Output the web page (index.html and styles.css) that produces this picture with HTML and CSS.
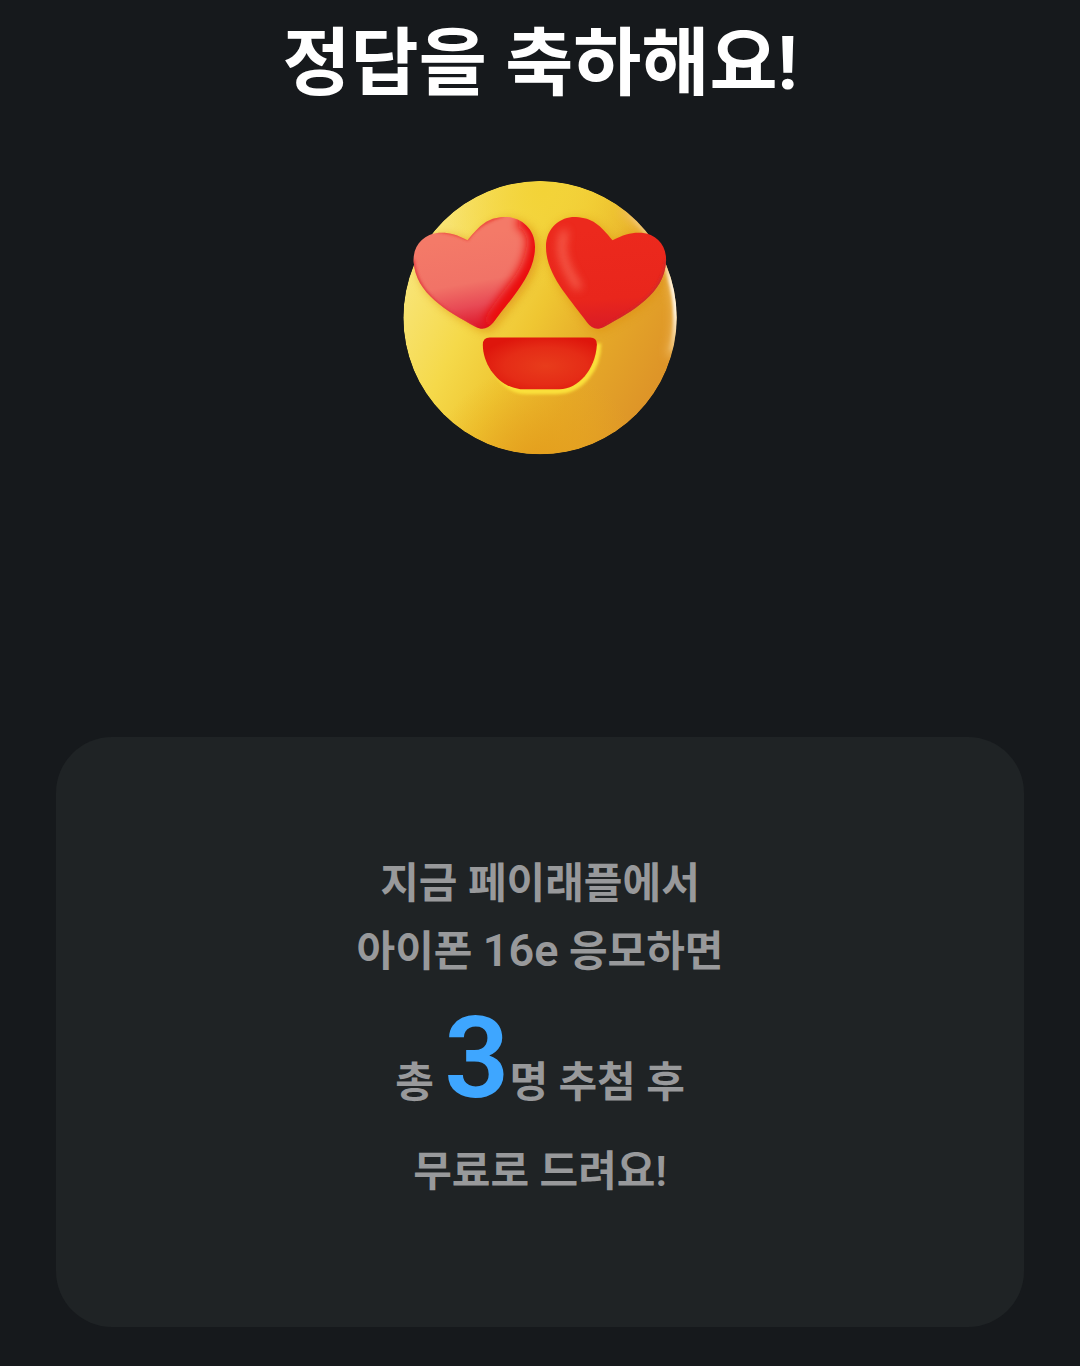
FILE: index.html
```
<!DOCTYPE html>
<html lang="ko">
<head>
    <meta charset="UTF-8">
    <meta name="viewport" content="width=device-width, initial-scale=1.0">
    <title>정답을 축하해요!</title>
    <link rel="stylesheet" href="styles.css">
</head>
<body>
    <main class="result">
        <h1 class="title">정답을 축하해요!</h1>

        <svg class="emoji" viewBox="37 33 824 824" role="img" aria-label="하트 눈 이모지">
            <defs>
                <linearGradient id="face" x1="0.06" y1="0.25" x2="0.94" y2="0.7">
                    <stop offset="0" stop-color="#f8e578"/>
                    <stop offset="0.28" stop-color="#f5d94a"/>
                    <stop offset="0.5" stop-color="#efc632"/>
                    <stop offset="0.74" stop-color="#e5a828"/>
                    <stop offset="1" stop-color="#de9528"/>
                </linearGradient>
                <radialGradient id="top" cx="460" cy="60" r="300" gradientUnits="userSpaceOnUse">
                    <stop offset="0" stop-color="#f3d337"/>
                    <stop offset="1" stop-color="#f3d337" stop-opacity="0"/>
                </radialGradient>
                <radialGradient id="bottom" cx="440" cy="910" r="320" gradientUnits="userSpaceOnUse">
                    <stop offset="0" stop-color="#e39c1c"/>
                    <stop offset="1" stop-color="#e9aa1c" stop-opacity="0"/>
                </radialGradient>
                <linearGradient id="rim" x1="0" y1="120" x2="0" y2="560" gradientUnits="userSpaceOnUse">
                    <stop offset="0" stop-color="#fff3df" stop-opacity="0"/>
                    <stop offset="0.5" stop-color="#fff3df"/>
                    <stop offset="0.7" stop-color="#fff3df"/>
                    <stop offset="1" stop-color="#fff3df" stop-opacity="0"/>
                </linearGradient>
                <linearGradient id="leftHeart" x1="220" y1="200" x2="270" y2="475" gradientUnits="userSpaceOnUse">
                    <stop offset="0" stop-color="#f47a68"/>
                    <stop offset="0.5" stop-color="#f17367"/>
                    <stop offset="0.75" stop-color="#e84a55"/>
                    <stop offset="1" stop-color="#dc1427"/>
                </linearGradient>
                <linearGradient id="rightHeart" x1="640" y1="180" x2="660" y2="475" gradientUnits="userSpaceOnUse">
                    <stop offset="0" stop-color="#ec291d"/>
                    <stop offset="0.7" stop-color="#e9261c"/>
                    <stop offset="1" stop-color="#d91b26"/>
                </linearGradient>
                <radialGradient id="mouth" cx="0.55" cy="0.55" r="0.6">
                    <stop offset="0" stop-color="#e83c1b"/>
                    <stop offset="0.6" stop-color="#e52c16"/>
                    <stop offset="1" stop-color="#de160c"/>
                </radialGradient>
                <filter id="blurSmall" filterUnits="userSpaceOnUse" x="0" y="0" width="900" height="900">
                    <feGaussianBlur stdDeviation="5"/>
                </filter>
                <filter id="blur" filterUnits="userSpaceOnUse" x="0" y="0" width="900" height="900">
                    <feGaussianBlur stdDeviation="14"/>
                </filter>
                <path id="leftShape" d="M231 211 C198 194 172 187 145 189 C98 193 66 229 69 276 C75 372 169 424 256 472 C275 482 293 478 309 458 C358 389 434 318 434 231 C434 169 382 139 340 141 C290 144 270 164 231 211 Z"/>
                <path id="rightShape" d="M667 211 C701 194 727 187 754 189 C801 193 831 229 828 276 C822 372 729 424 641 472 C622 482 604 478 590 458 C542 389 467 318 467 231 C467 169 515 139 557 141 C607 144 629 164 667 211 Z"/>
                <clipPath id="faceClip"><circle cx="449" cy="444" r="411"/></clipPath>
                <clipPath id="leftClip"><use href="#leftShape"/></clipPath>
                <clipPath id="rightClip"><use href="#rightShape"/></clipPath>
            </defs>

            <!-- face -->
            <g clip-path="url(#faceClip)">
                <circle cx="449" cy="444" r="411" fill="url(#face)"/>
                <circle cx="449" cy="444" r="411" fill="url(#top)"/>
                <circle cx="449" cy="444" r="411" fill="url(#bottom)"/>
                <path d="M700 115 A411 411 0 0 1 843 560" fill="none" stroke="#f1bd62" stroke-width="26" filter="url(#blur)"/>
                <path d="M720 132 A411 411 0 0 1 846 545" fill="none" stroke="url(#rim)" stroke-width="20" filter="url(#blurSmall)"/>
                <use href="#leftShape" x="12" y="8" fill="#d9820d" opacity="0.6" filter="url(#blur)"/>
                <use href="#rightShape" x="4" y="6" fill="#d9820d" opacity="0.5" filter="url(#blur)"/>
            </g>

            <!-- eyes -->
            <use href="#leftShape" fill="url(#leftHeart)"/>
            <g clip-path="url(#leftClip)">
                <path d="M390 140 C435 160 450 200 436 250 C420 335 350 385 306 470" fill="none" stroke="#eb1009" stroke-width="62" filter="url(#blur)"/>
                <path d="M140 182 Q195 190 231 207 Q260 160 340 135" fill="none" stroke="#e93a2c" stroke-width="8" filter="url(#blurSmall)"/>
                <path d="M66 270 C73 374 167 428 254 478" fill="none" stroke="#e0393c" stroke-width="12" filter="url(#blurSmall)"/>
            </g>
            <use href="#rightShape" fill="url(#rightHeart)"/>
            <g clip-path="url(#rightClip)">
                <path d="M522 190 C500 245 530 300 562 350" fill="none" stroke="#fa7461" stroke-width="20" stroke-linecap="round" opacity="0.85" filter="url(#blur)"/>
                <path d="M832 270 C826 374 731 428 643 478" fill="none" stroke="#c92a2c" stroke-width="14" filter="url(#blurSmall)"/>
            </g>

            <!-- mouth -->
            <path d="M300 560 C320 620 350 665 410 665 H500 C570 665 624 600 624 522" fill="none" stroke="#fbe13a" stroke-width="18" filter="url(#blurSmall)"/>
            <path d="M298 504 H600 Q621 504 620 526 C615 600 565 658 507 659 H390 C330 654 278 592 277 526 Q277 504 298 504 Z" fill="url(#mouth)"/>
        </svg>

        <section class="card">
            <p class="line">지금 페이래플에서</p>
            <p class="line">아이폰 <span class="model">16e</span> 응모하면</p>
            <p class="line line-count">총 <strong class="count">3</strong>명 추첨 후</p>
            <p class="line">무료로 드려요!</p>
        </section>
    </main>
</body>
</html>
```
FILE: styles.css
```
* {
    box-sizing: border-box;
}

body {
    margin: 0;
    min-height: 100vh;
    background-color: #16191c;
    font-family: Roboto, "Noto Sans CJK KR", sans-serif;
}

.result {
    display: flex;
    flex-direction: column;
    align-items: center;
    padding: 12px 56px 39px;
}

.title {
    margin: 0;
    color: #fff;
    font-size: 74px;
    font-weight: 700;
    line-height: 104px;
    text-align: center;
}

.emoji {
    display: block;
    width: 274px;
    height: 274px;
    margin: 65px 0 282px;
}

.card {
    width: 100%;
    padding: 113px 40px 121px;
    border-radius: 56px;
    background-color: #1f2325;
    color: #98999b;
    text-align: center;
}

.line {
    margin: 0;
    font-size: 42px;
    font-weight: 600;
    line-height: 68px;
}

.line-count {
    margin-bottom: 8px;
}

.model {
    font-size: 45px;
    line-height: 1;
}

.count {
    color: #3ea6ff;
    font-size: 114px;
    font-weight: 600;
    line-height: 144px;
}
```
